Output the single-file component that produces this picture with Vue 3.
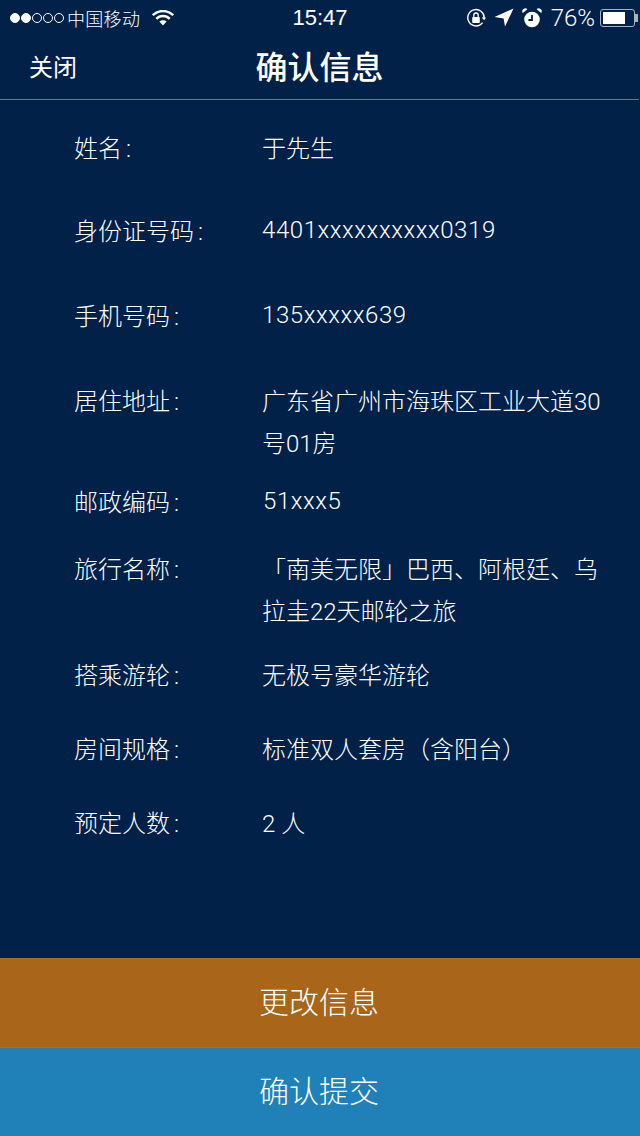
<template>
  <div class="page">
    <div class="status-bar">
      <div class="status-left">
        <span class="signal">
          <i class="dot on"></i><i class="dot on"></i><i class="dot"></i><i class="dot"></i><i class="dot"></i>
        </span>
        <span class="carrier">中国移动</span>
        <svg class="wifi" width="22" height="16" viewBox="0 0 22 16">
          <path d="M0.8 5.2 A14.5 14.5 0 0 1 21.2 5.2" fill="none" stroke="#fff" stroke-width="2.4" />
          <path d="M4.3 8.8 A9.5 9.5 0 0 1 17.7 8.8" fill="none" stroke="#fff" stroke-width="2.4" />
          <path d="M7.4 11.6 A5.2 5.2 0 0 1 14.6 11.6 L11 15.6 Z" fill="#fff" />
        </svg>
      </div>
      <div class="time">15:47</div>
      <div class="status-right">
        <svg width="20" height="20" viewBox="0 0 20 20">
          <path d="M16.6 14.6 A8.2 8.2 0 1 1 18.2 10" fill="none" stroke="#fff" stroke-width="1.4" />
          <path d="M15.6 9.4 L18.2 12.2 L20 9.4 Z" fill="#fff" />
          <rect x="6.2" y="9" width="7.6" height="6" rx="1" fill="#fff" />
          <path d="M7.8 9 V7.2 A2.2 2.2 0 0 1 12.2 7.2 V9" fill="none" stroke="#fff" stroke-width="1.3" />
        </svg>
        <svg width="20" height="20" viewBox="0 0 20 20">
          <path d="M19.5 0.5 L11 18.5 L9.6 10.4 L0.5 9 Z" fill="#fff" />
        </svg>
        <svg width="20" height="20" viewBox="0 0 20 20">
          <circle cx="10" cy="11.5" r="7.8" fill="#fff" />
          <path d="M10 7 V12 H6.4" fill="none" stroke="#012148" stroke-width="1.8" />
          <path d="M0.8 5 A3 3 0 0 1 5.4 1.2 Z M19.2 5 A3 3 0 0 0 14.6 1.2 Z" fill="#fff" />
        </svg>
        <span class="percent">76%</span>
        <div class="battery">
          <div class="battery-level"></div>
        </div>
      </div>
    </div>

    <div class="header">
      <span class="close">关闭</span>
      <h1 class="title">确认信息</h1>
    </div>

    <div class="info-list">
      <div v-for="item in rows" :key="item.label" class="info-row">
        <div class="label">{{ item.label }}<span class="colon">:</span></div>
        <div class="value" :class="{ latin: item.latin }">{{ item.value }}</div>
      </div>
    </div>

    <div class="actions">
      <button class="btn btn-change">更改信息</button>
      <button class="btn btn-submit">确认提交</button>
    </div>
  </div>
</template>

<script setup>
const rows = [
  { label: '姓名', value: '于先生' },
  { label: '身份证号码', value: '4401xxxxxxxxxx0319', latin: true },
  { label: '手机号码', value: '135xxxxx639', latin: true },
  { label: '居住地址', value: '广东省广州市海珠区工业大道30号01房' },
  { label: '邮政编码', value: '51xxx5', latin: true },
  { label: '旅行名称', value: '「南美无限」巴西、阿根廷、乌拉圭22天邮轮之旅' },
  { label: '搭乘游轮', value: '无极号豪华游轮' },
  { label: '房间规格', value: '标准双人套房（含阳台）' },
  { label: '预定人数', value: '2 人' }
]
</script>

<style scoped>
.page {
  width: 640px;
  height: 1136px;
  background: #012148;
  color: #fff;
  display: flex;
  flex-direction: column;
  overflow: hidden;
  font-family: Roboto, "Liberation Sans", "Noto Sans CJK SC", sans-serif;
}

.status-bar {
  height: 36px;
  display: grid;
  grid-template-columns: 1fr auto 1fr;
  align-items: center;
}

.status-left {
  padding-left: 10px;
  display: flex;
  align-items: center;
}

.signal {
  display: flex;
  gap: 1px;
}

.dot {
  width: 10px;
  height: 10px;
  border: 1px solid #fff;
  border-radius: 50%;
  box-sizing: border-box;
}

.dot.on {
  background: #fff;
}

.carrier {
  margin-left: 3px;
  font-size: 18px;
  letter-spacing: 0.3px;
  font-weight: 300;
}

.wifi {
  margin-left: 12px;
}

.time {
  font-size: 22px;
  font-family: "Liberation Sans", sans-serif;
}

.status-right {
  display: flex;
  align-items: center;
  justify-content: flex-end;
  padding-right: 2px;
  gap: 8px;
}

.percent {
  margin-left: 1px;
  font-size: 24px;
  font-weight: 300;
}

.battery {
  position: relative;
  width: 35px;
  height: 18px;
  margin-left: -3px;
  margin-right: 3px;
  padding: 2px;
  border: 1px solid #a9b2bf;
  border-radius: 3px;
  box-sizing: border-box;
}

/* 电池头 */
.battery::after {
  content: "";
  position: absolute;
  right: -4px;
  top: 4px;
  width: 3px;
  height: 8px;
  background: #a9b2bf;
}

.battery-level {
  width: 75%;
  height: 100%;
  background: #fff;
}

.header {
  height: 58px;
  padding-bottom: 5px;
  border-bottom: 1px solid #3c7fbd;
  margin-right: 1px;
  display: grid;
  grid-template-columns: 1fr auto 1fr;
  align-items: center;
}

.close {
  padding-left: 29px;
  font-size: 24px;
}

.title {
  margin: 0;
  font-size: 32px;
  font-weight: 500;
}

.info-list {
  padding: 28px 0 0 74px;
  font-weight: 300;
}

.info-row {
  display: flex;
  font-size: 24px;
  line-height: 42px;
}

.info-row:nth-child(1) { margin-bottom: 41px; }
.info-row:nth-child(2) { margin-bottom: 43px; }
.info-row:nth-child(3) { margin-bottom: 43px; }
.info-row:nth-child(4) { margin-bottom: 17px; }
.info-row:nth-child(5) { margin-bottom: 25px; }
.info-row:nth-child(6) { margin-bottom: 22px; }
.info-row:nth-child(7) { margin-bottom: 32px; }
.info-row:nth-child(8) { margin-bottom: 32px; }

.label {
  width: 188px;
  flex: none;
}

.colon {
  margin-left: 4px;
}

.value {
  width: 345px;
}

.value.latin {
  margin-top: -2px;
  letter-spacing: 0.58px;
}

.info-row:nth-child(5) .value {
  margin-left: 1px;
}

.actions {
  margin-top: auto;
  display: flex;
  flex-direction: column;
}

.btn {
  display: block;
  width: 100%;
  border: none;
  padding: 0 2px 6px 0;
  color: #fff;
  font-family: inherit;
  font-size: 30px;
  font-weight: 300;
}

.btn-change {
  height: 90px;
  background: #a9651a;
  border-top: 1px solid #bb6a10;
  border-bottom: 1px solid #bb6a10;
}

.btn-submit {
  height: 88px;
  background: #2080b8;
}
</style>
